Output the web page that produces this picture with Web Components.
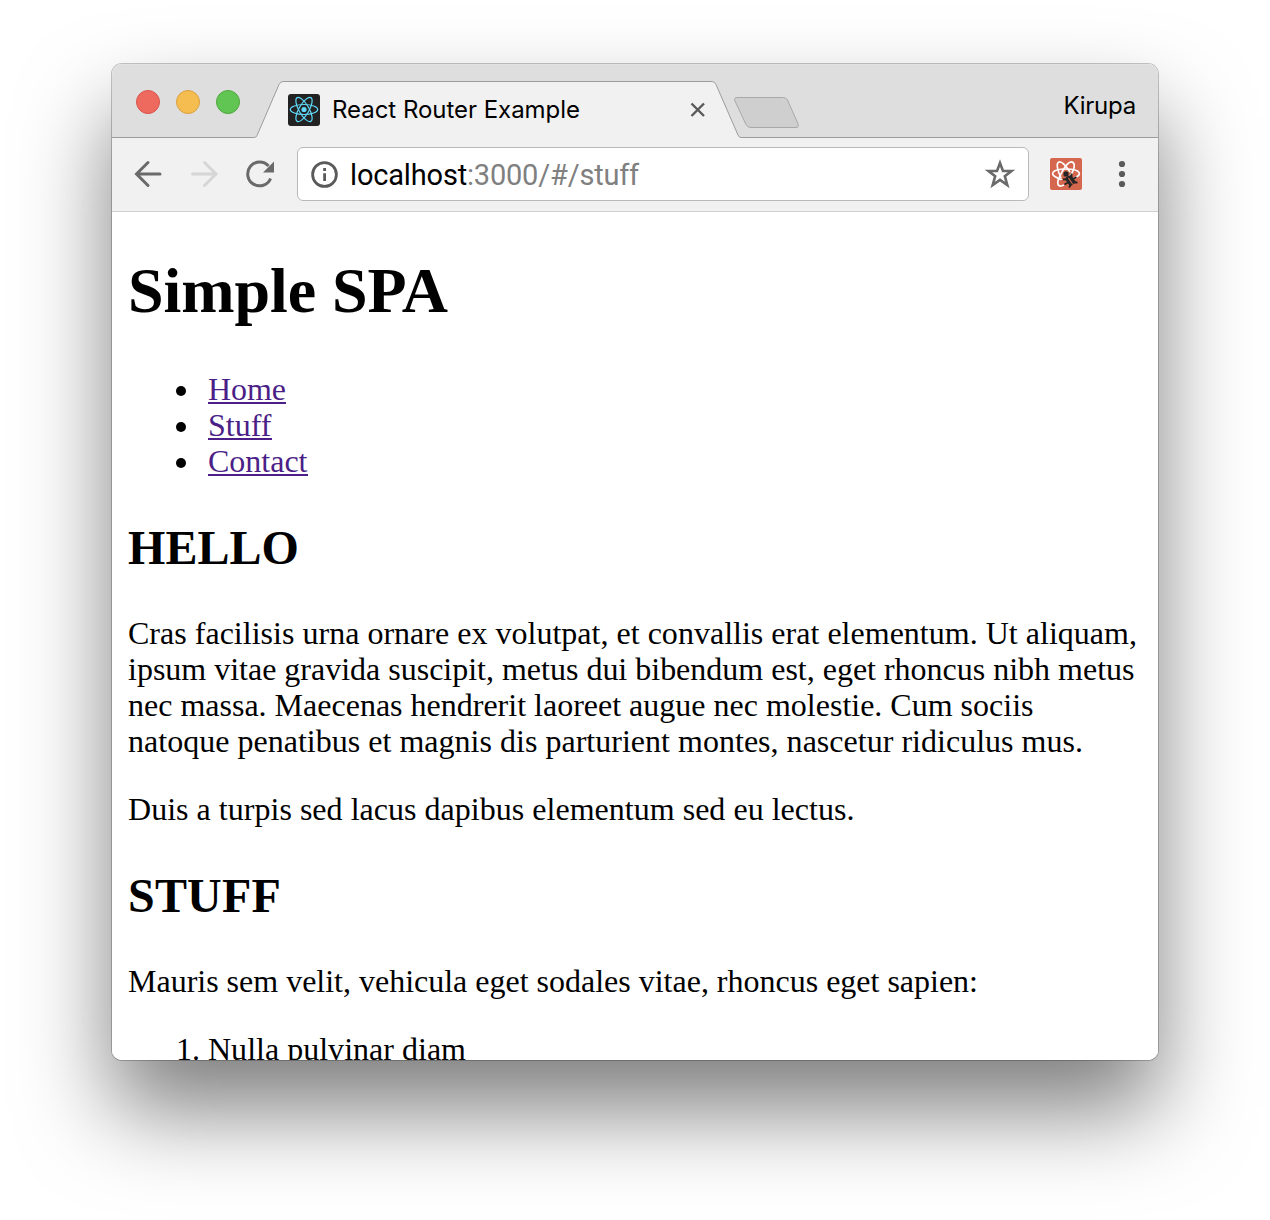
<!DOCTYPE html>
<html lang="en"><head><meta charset="utf-8"><title>React Router Example</title>
<style>
html,body{margin:0;height:100%;background:#fff}
body{font-family:"Liberation Serif",serif;overflow:hidden}
</style></head><body>
<browser-window>
  <tab-strip slot="tabs"></tab-strip>
  <tool-bar slot="toolbar"></tool-bar>
  <spa-page></spa-page>
</browser-window>
<script>
class Base extends HTMLElement{
  constructor(){super();this.attachShadow({mode:'open'}).innerHTML=this.constructor.html;}
}

/* One line of text set to an exact advance width in pixels. */
customElements.define('fit-text',class extends Base{
  static html=`<style>:host{display:inline-block;white-space:nowrap;vertical-align:baseline}</style><slot></slot>`;
  connectedCallback(){requestAnimationFrame(()=>this.fit());this.fit();}
  fit(){
    this.style.letterSpacing='0px';
    const n=this.textContent.length,w=this.getBoundingClientRect().width;
    if(w&&n)this.style.letterSpacing=((+this.getAttribute('w')-w)/n).toFixed(4)+'px';
  }
});

customElements.define('browser-window',class extends Base{
  static html=`<style>
  :host{display:block;box-sizing:border-box;width:1270px;height:1220px;padding:64px 112px 160px}
  .w{display:flex;flex-direction:column;width:1046px;height:996px;border-radius:10px;overflow:hidden;background:#fff}
  .s{border-radius:10px;width:1046px;box-shadow:0 0 0 1px rgba(0,0,0,.22),0 50px 90px rgba(0,0,0,.51)}
  </style><div class="s"><div class="w"><slot name="tabs"></slot><slot name="toolbar"></slot><slot></slot></div></div>`;
});

customElements.define('traffic-lights',class extends Base{
  static html=`<style>:host{display:flex;gap:16px}i{box-sizing:border-box;width:24px;height:24px;border-radius:50%;border:1px solid}
  .r{background:#ee6a5f;border-color:#d9534b}.y{background:#f5bd4f;border-color:#d9a040}.g{background:#61c554;border-color:#4fa73c}</style>
  <i class="r"></i><i class="y"></i><i class="g"></i>`;
});

customElements.define('tab-strip',class extends Base{
  static html=`<style>
  :host{display:grid;height:74px;flex:none;background:#dedede;font-family:Inter,sans-serif;font-size:24px;color:#000}
  :host>*{grid-area:1/1}
  .row{display:flex;align-items:center;height:74px}
  traffic-lights{margin:2px 48px 0 24px}
  .fav{margin:18px 12px 0 0;flex:none}
  .t{margin-top:17px;width:353px;line-height:30px}
  .x{margin-top:18px}
  .k{margin:9px 22px 0 auto;line-height:30px}
  svg{display:block}
  </style>
  <svg width="1046" height="74" viewBox="0 0 1046 74">
    <path d="M0 .5H1046" stroke="#e2e2e2"/>
    <path d="M-2 73.500H142.500Q144 73.500 145 71.500L167 20.500Q168.500 17.500 171 17.500H600Q602.500 17.500 604 20.500L626 71Q627 73.500 629 73.500H1048V76H-2Z" fill="#f1f1f1" stroke="#9c9c9c"/>
    <path d="M625 33.500H671.500Q674 33.500 675.500 36L685.900 59.500Q687.500 63.500 684 63.500H639Q635.500 63.500 634 60.500L623 37Q621.500 33.500 625 33.500Z" fill="#cfcfcf" stroke="#a8a8a8"/>
  </svg>
  <div class="row">
    <traffic-lights></traffic-lights>
    <svg class="fav" width="32" height="32" viewBox="0 0 32 32"><rect width="32" height="32" rx="3" fill="#222"/>
      <g fill="none" stroke="#61dafb" stroke-width="1.200"><ellipse cx="16" cy="15.500" rx="13.700" ry="5"/><ellipse cx="16" cy="15.500" rx="13.700" ry="5" transform="rotate(60 16 15.500)"/><ellipse cx="16" cy="15.500" rx="13.700" ry="5" transform="rotate(120 16 15.500)"/></g><circle cx="16" cy="15.500" r="2.600" fill="#61dafb"/></svg>
    <div class="t"><fit-text w="248">React Router Example</fit-text></div>
    <svg class="x" width="26" height="16" viewBox="0 0 26 16"><path d="M6.500 1.500L19 14M19 1.500L6.500 14" stroke="#5a5a5a" stroke-width="2.400"/></svg>
    <div class="k"><fit-text w="72.5">Kirupa</fit-text></div>
  </div>`;
});

customElements.define('tool-bar',class extends Base{
  static html=`<style>
  :host{display:flex;align-items:center;flex:none;box-sizing:border-box;height:74px;padding:0 0 2px 22px;background:#f1f1f1;border-bottom:1px solid #d0d0d0}
  svg{display:block;flex:none}
  .box{display:flex;align-items:center;box-sizing:border-box;width:732px;height:54px;margin-left:21px;padding-left:12px;border:1px solid #b9b9b9;border-radius:6px;background:#fff;font:29px/36px Roboto,sans-serif;color:#000}
  .u{width:634px;margin:2px 0 0 12px;white-space:nowrap}.g{color:#808080}
  </style>
  <svg width="142" height="32" viewBox="0 0 142 32" fill="none" stroke-width="3">
    <path d="M26 16H3M14 4.500L2.500 16L14 27.500" stroke="#6a6a6a" stroke-linecap="round"/>
    <path d="M58.500 16H81.500M70.500 4.500L82 16L70.500 27.500" stroke="#d6d6d6" stroke-linecap="round"/>
    <path d="M136.600 20.500A11.900 11.900 0 1 1 134.500 8" stroke="#6a6a6a"/><path d="M140 3.500V14.500H129Z" fill="#6a6a6a"/>
  </svg>
  <div class="box">
    <svg width="28" height="28" viewBox="0 0 28 28"><circle cx="14.500" cy="14.500" r="11.900" fill="none" stroke="#5a5a5a" stroke-width="2.800"/><path d="M13.200 8H16V11H13.200ZM13.200 13.200H16V21H13.200Z" fill="#5a5a5a"/></svg>
    <div class="u"><fit-text w="117">localhost</fit-text><fit-text class="g" w="172">:3000/#/stuff</fit-text></div>
    <svg width="32" height="32" viewBox="0 0 32 32"><path d="M16 5L19 13H27.500L20.800 18.200L23.300 27L16 21.900L8.700 27L11.200 18.200L4.500 13H13Z" fill="none" stroke="#6a6a6a" stroke-width="2.600"/></svg>
  </div>
  <svg style="margin-left:21px" width="32" height="32" viewBox="0 0 32 32"><rect width="32" height="32" rx="2" fill="#d4674e"/>
    <g fill="none" stroke="#fff" stroke-width="1.700"><path d="M8 20C-1 17 1 11 16 11S33 17 24 20"/><path d="M14 27C8 30 6 26 9.500 19C15 7 20 2 23 4.500C26 7 23 14 20 18"/><path d="M11 20C7 11 6 5 9 4C12 3 16 8 20 14M7 20Q10 22 12 21"/></g>
    <g fill="#252525"><rect x="13.500" y="13.500" width="5" height="5" rx="1.500"/><path d="M16 19L21 17L26 24L20 28.500L15.500 22Z"/></g>
    <path d="M13 21.500L17 21M14.500 26.500L18 24.500M19 29.500L21 26.500M21.500 19V15.500M23 21L26.500 19M24 24.500H27.500" stroke="#252525" stroke-width="1.800" fill="none"/><path d="M18.500 20L22.500 26" stroke="#d4674e" stroke-width="1.200"/></svg>
  <svg style="margin-left:35px" width="10" height="32" viewBox="0 0 10 32" fill="#5a5a5a"><circle cx="5" cy="6" r="3.100"/><circle cx="5" cy="16" r="3.100"/><circle cx="5" cy="26" r="3.100"/></svg>`;
});

customElements.define('spa-page',class extends Base{
  static html=`<style>
  :host{display:flow-root;flex:1;min-height:0;overflow:hidden;padding:0 16px;font:32px/36px "Liberation Serif",serif;color:#000;background:#fff}
  h1{font-size:64px;line-height:72px;margin:43px 0 44px}
  h2{font-size:48px;line-height:56px;margin:41px 0 39px}
  ul,ol{margin:0;padding-left:80px}
  p{margin:0 0 32px}p.e{margin:0}
  p fit-text{display:block;width:max-content}
  a{color:#4b1f87;text-decoration:none;border-bottom:2px solid;display:inline-block;line-height:26px}
  ul{list-style:none;padding-left:62px}
  li{height:36px}
  ul li{display:flex;align-items:flex-start}
  ul li::before{content:"";width:10px;height:10px;border-radius:50%;background:#000;margin:15px 22px 0 -14px}
  ul a{margin-top:5px}
  </style>
  <h1><fit-text w="320">Simple SPA</fit-text></h1>
  <ul><li><a><fit-text w="78">Home</fit-text></a></li><li><a><fit-text w="63.5">Stuff</fit-text></a></li><li><a><fit-text w="99.5">Contact</fit-text></a></li></ul>
  <h2><fit-text w="171">HELLO</fit-text></h2>
  <p><fit-text w="1009">Cras facilisis urna ornare ex volutpat, et convallis erat elementum. Ut aliquam,</fit-text><fit-text w="1006.5">ipsum vitae gravida suscipit, metus dui bibendum est, eget rhoncus nibh metus</fit-text><fit-text w="905.5">nec massa. Maecenas hendrerit laoreet augue nec molestie. Cum sociis</fit-text><fit-text w="955">natoque penatibus et magnis dis parturient montes, nascetur ridiculus mus.</fit-text></p>
  <p class="e"><fit-text w="726.5">Duis a turpis sed lacus dapibus elementum sed eu lectus.</fit-text></p>
  <h2><fit-text w="153">STUFF</fit-text></h2>
  <p><fit-text w="850">Mauris sem velit, vehicula eget sodales vitae, rhoncus eget sapien:</fit-text></p>
  <ol><li><fit-text w="258">Nulla pulvinar diam</fit-text></li></ol>`;
});
</script></body></html>
